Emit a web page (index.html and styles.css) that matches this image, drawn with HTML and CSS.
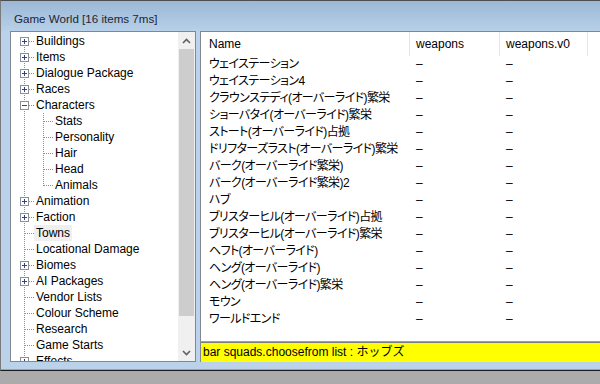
FILE: index.html
```html
<!DOCTYPE html>
<html>
<head>
<meta charset="utf-8">
<title>Game World</title>
<link rel="stylesheet" href="styles.css">
</head>
<body>
<div class="window">
    <div class="titlebar">Game World [16 items 7ms]</div>
    <div class="panes">
        <div class="treebox">
            <div class="tree">
                <div class="node"><span class="gut r first"><svg class="exp" width="9" height="9" viewBox="0 0 9 9"><rect x="0.5" y="0.5" width="8" height="8" fill="#fff" stroke="#8f8f8f"/><path d="M2 4.5h5M4.5 2v5" stroke="#27468c"/></svg></span><span class="lbl">Buildings</span></div>
                <div class="node"><span class="gut r"><svg class="exp" width="9" height="9" viewBox="0 0 9 9"><rect x="0.5" y="0.5" width="8" height="8" fill="#fff" stroke="#8f8f8f"/><path d="M2 4.5h5M4.5 2v5" stroke="#27468c"/></svg></span><span class="lbl">Items</span></div>
                <div class="node"><span class="gut r"><svg class="exp" width="9" height="9" viewBox="0 0 9 9"><rect x="0.5" y="0.5" width="8" height="8" fill="#fff" stroke="#8f8f8f"/><path d="M2 4.5h5M4.5 2v5" stroke="#27468c"/></svg></span><span class="lbl">Dialogue Package</span></div>
                <div class="node"><span class="gut r"><svg class="exp" width="9" height="9" viewBox="0 0 9 9"><rect x="0.5" y="0.5" width="8" height="8" fill="#fff" stroke="#8f8f8f"/><path d="M2 4.5h5M4.5 2v5" stroke="#27468c"/></svg></span><span class="lbl">Races</span></div>
                <div class="node"><span class="gut r"><svg class="exp" width="9" height="9" viewBox="0 0 9 9"><rect x="0.5" y="0.5" width="8" height="8" fill="#fff" stroke="#8f8f8f"/><path d="M2 4.5h5" stroke="#27468c"/></svg></span><span class="lbl">Characters</span></div>
                <div class="node"><span class="gut c"></span><span class="lbl">Stats</span></div>
                <div class="node"><span class="gut c"></span><span class="lbl">Personality</span></div>
                <div class="node"><span class="gut c"></span><span class="lbl">Hair</span></div>
                <div class="node"><span class="gut c"></span><span class="lbl">Head</span></div>
                <div class="node"><span class="gut c last"></span><span class="lbl">Animals</span></div>
                <div class="node"><span class="gut r"><svg class="exp" width="9" height="9" viewBox="0 0 9 9"><rect x="0.5" y="0.5" width="8" height="8" fill="#fff" stroke="#8f8f8f"/><path d="M2 4.5h5M4.5 2v5" stroke="#27468c"/></svg></span><span class="lbl">Animation</span></div>
                <div class="node"><span class="gut r"><svg class="exp" width="9" height="9" viewBox="0 0 9 9"><rect x="0.5" y="0.5" width="8" height="8" fill="#fff" stroke="#8f8f8f"/><path d="M2 4.5h5M4.5 2v5" stroke="#27468c"/></svg></span><span class="lbl">Faction</span></div>
                <div class="node"><span class="gut r"></span><span class="lbl sel">Towns</span></div>
                <div class="node"><span class="gut r"></span><span class="lbl">Locational Damage</span></div>
                <div class="node"><span class="gut r"><svg class="exp" width="9" height="9" viewBox="0 0 9 9"><rect x="0.5" y="0.5" width="8" height="8" fill="#fff" stroke="#8f8f8f"/><path d="M2 4.5h5M4.5 2v5" stroke="#27468c"/></svg></span><span class="lbl">Biomes</span></div>
                <div class="node"><span class="gut r"><svg class="exp" width="9" height="9" viewBox="0 0 9 9"><rect x="0.5" y="0.5" width="8" height="8" fill="#fff" stroke="#8f8f8f"/><path d="M2 4.5h5M4.5 2v5" stroke="#27468c"/></svg></span><span class="lbl">AI Packages</span></div>
                <div class="node"><span class="gut r"></span><span class="lbl">Vendor Lists</span></div>
                <div class="node"><span class="gut r"></span><span class="lbl">Colour Scheme</span></div>
                <div class="node"><span class="gut r"></span><span class="lbl">Research</span></div>
                <div class="node"><span class="gut r"></span><span class="lbl">Game Starts</span></div>
                <div class="node"><span class="gut r"><svg class="exp" width="9" height="9" viewBox="0 0 9 9"><rect x="0.5" y="0.5" width="8" height="8" fill="#fff" stroke="#8f8f8f"/><path d="M2 4.5h5M4.5 2v5" stroke="#27468c"/></svg></span><span class="lbl">Effects</span></div>
            </div>
            <div class="vscroll">
                <div class="sbtn"><svg width="9" height="6" viewBox="0 0 9 6"><path d="M1 5L4.5 1.5L8 5" fill="none" stroke="#606060" stroke-width="1.6"/></svg></div>
                <div class="thumb"></div>
                <div class="track"></div>
                <div class="sbtn"><svg width="9" height="6" viewBox="0 0 9 6"><path d="M1 1L4.5 4.5L8 1" fill="none" stroke="#606060" stroke-width="1.6"/></svg></div>
            </div>
        </div>
        <div class="splitter"></div>
        <div class="rightcol">
            <div class="list">
                <div class="lhead">
                    <span class="hc name">Name</span>
                    <span class="hc">weapons</span>
                    <span class="hc">weapons.v0</span>
                    <span></span>
                </div>
                <div class="lrow"><span>ウェイステーション</span><span>–</span><span>–</span></div>
                <div class="lrow"><span>ウェイステーション4</span><span>–</span><span>–</span></div>
                <div class="lrow"><span>クラウンステディ(オーバーライド)繁栄</span><span>–</span><span>–</span></div>
                <div class="lrow"><span>ショーバタイ(オーバーライド)繁栄</span><span>–</span><span>–</span></div>
                <div class="lrow"><span>ストート(オーバーライド)占拠</span><span>–</span><span>–</span></div>
                <div class="lrow"><span>ドリフターズラスト(オーバーライド)繁栄</span><span>–</span><span>–</span></div>
                <div class="lrow"><span>バーク(オーバーライド繁栄)</span><span>–</span><span>–</span></div>
                <div class="lrow"><span>バーク(オーバーライド繁栄)2</span><span>–</span><span>–</span></div>
                <div class="lrow"><span>ハブ</span><span>–</span><span>–</span></div>
                <div class="lrow"><span>ブリスターヒル(オーバーライド)占拠</span><span>–</span><span>–</span></div>
                <div class="lrow"><span>ブリスターヒル(オーバーライド)繁栄</span><span>–</span><span>–</span></div>
                <div class="lrow"><span>ヘフト(オーバーライド)</span><span>–</span><span>–</span></div>
                <div class="lrow"><span>ヘング(オーバーライド)</span><span>–</span><span>–</span></div>
                <div class="lrow"><span>ヘング(オーバーライド)繁栄</span><span>–</span><span>–</span></div>
                <div class="lrow"><span>モウン</span><span>–</span><span>–</span></div>
                <div class="lrow"><span>ワールドエンド</span><span>–</span><span>–</span></div>
            </div>
            <div class="status">bar squads.choosefrom list : ホッブズ</div>
        </div>
    </div>
    <div class="edge"></div>
</div>
</body>
</html>
```

FILE: styles.css
```css
:root {
    --dotv: repeating-linear-gradient(to bottom, #8e8e8e 0 1px, transparent 1px 2px);
    --doth: repeating-linear-gradient(to right, #8e8e8e 0 1px, transparent 1px 2px);
}
body {
    margin: 0;
    width: 600px;
    height: 384px;
    overflow: hidden;
    background-color: #ababab;
    font-family: "Liberation Sans", "Noto Sans CJK JP", sans-serif;
    font-size: 12px;
    color: #000;
}
.window {
    border-top: 1px solid #4e4e4e;
    border-left: 1px solid #7a7a7a;
    border-bottom: 1px solid #1b1b1b;
    background-color: #bad2ea;
}
.titlebar {
    height: 30px;
    box-sizing: border-box;
    padding: 10px 0 0 13px;
    line-height: 16px;
    font-size: 11.6px;
    background: linear-gradient(#9bb8d6, #b8d0e9);
    color: #1c2533;
}
.panes {
    display: flex;
    height: 331px;
    padding-left: 9px;
}

/* tree */
.treebox {
    width: 186px;
    box-sizing: border-box;
    border: 1px solid #828790;
    background-color: #fff;
    display: flex;
}
.tree {
    flex: 1;
    overflow: hidden;
    padding-top: 1px;
}
.node {
    display: flex;
    height: 16px;
    line-height: 16px;
    white-space: nowrap;
}
.gut {
    flex: none;
    height: 16px;
    background-repeat: no-repeat;
}
.gut.r {
    width: 23px;
    background-image: var(--dotv), var(--doth);
    background-size: 1px 16px, 9px 1px;
    background-position: 13px 0, 14px 8px;
}
.gut.r.first {
    background-size: 1px 8px, 9px 1px;
    background-position: 13px 8px, 14px 8px;
}
.gut.c {
    width: 42px;
    background-image: var(--dotv), var(--dotv), var(--doth);
    background-size: 1px 16px, 1px 16px, 9px 1px;
    background-position: 13px 0, 32px 0, 33px 8px;
}
.gut.c.last {
    background-size: 1px 16px, 1px 9px, 9px 1px;
}
.exp {
    display: block;
    margin: 4px 0 0 9px;
}
.lbl {
    padding: 0 2px;
}
.lbl.sel {
    background-color: #efefef;
}
.vscroll {
    width: 17px;
    background-color: #f0f0f0;
    display: flex;
    flex-direction: column;
}
.sbtn {
    height: 17px;
    display: flex;
    align-items: center;
    justify-content: center;
}
.thumb {
    height: 267px;
    margin: 0 1px;
    background-color: #cdcdcd;
}
.track {
    flex: 1;
}
.splitter {
    width: 4px;
}

/* list */
.rightcol {
    flex: 1;
    display: flex;
    flex-direction: column;
}
.list {
    flex: 1;
    border: 1px solid #828790;
    border-right: 0;
    border-bottom-color: #a0a0a0;
    background-color: #fff;
    overflow: hidden;
}
.lhead, .lrow {
    display: grid;
    grid-template-columns: 209px 90px 88px 1fr;
    white-space: nowrap;
}
.lhead {
    height: 24px;
}
.hc {
    border-right: 1px solid #e5e5e5;
    padding: 4px 0 0 6px;
    line-height: 16px;
}
.hc.name, .lrow span:first-child {
    padding-left: 8px;
}
.lrow {
    height: 17px;
    line-height: 17px;
    font-feature-settings: "palt";
}
.lrow span {
    padding-left: 6px;
}
.lrow span:first-child {
    letter-spacing: -0.6px;
}
.status {
    height: 19px;
    border-top: 1px solid #7d7d7d;
    border-left: 1px solid #828790;
    background-color: #ff0;
    padding-left: 2px;
    line-height: 19px;
    white-space: nowrap;
}
.edge {
    height: 1px;
    margin-top: 7px;
    background-color: #4cc0ee;
}
```
